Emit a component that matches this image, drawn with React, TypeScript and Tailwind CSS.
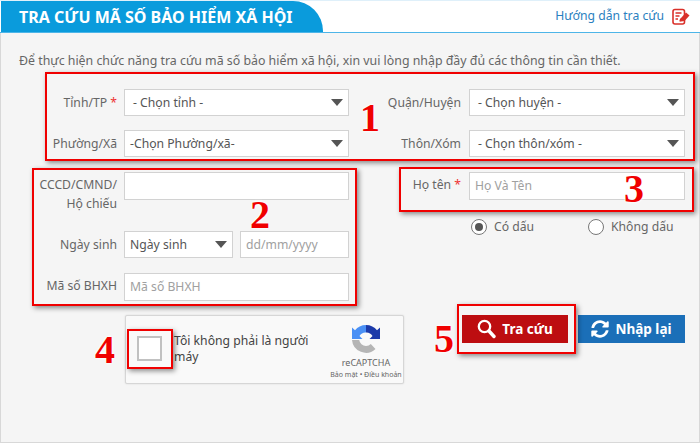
import type { ReactNode } from "react";
import { FaSyncAlt } from "react-icons/fa";

const boxClass = "h-full w-full border border-[#d2d2d2] bg-white text-[12.2px] text-[#555]";

function Label({ children, w, className = "" }: { children: ReactNode; w: string; className?: string }) {
  return <div className={`${w} shrink-0 text-right text-[12.2px] leading-[19px] text-[#666] ${className}`}>{children}</div>;
}

function Arrow() {
  return <span className="ml-auto mr-[5px] h-0 w-0 border-x-[6px] border-t-[7px] border-x-transparent border-t-[#555]" />;
}

function Select({ text, indent = "pl-[8px]" }: { text: string; indent?: string }) {
  return (
    <div className={`${boxClass} flex items-center ${indent}`}>
      <span className="pt-[2px]">{text}</span>
      <Arrow />
    </div>
  );
}

function Input({ placeholder }: { placeholder?: string }) {
  return (
    <div className={`${boxClass} flex items-center pl-[5px]`}>
      <span className="pt-[1px] text-[#a0a0a0]">{placeholder}</span>
    </div>
  );
}

function Radio({ on, label, className }: { on?: boolean; label: string; className: string }) {
  return (
    <div className={`flex items-center ${className}`}>
      <span className="flex h-[16px] w-[16px] items-center justify-center rounded-full border border-[#777] bg-white">
        {on && <span className="h-[8px] w-[8px] rounded-full bg-[#555]" />}
      </span>
      <span className="ml-[7px] text-[12.2px] text-[#666]">{label}</span>
    </div>
  );
}

function Mark({ className }: { className: string }) {
  return <div className={`absolute border-2 border-[#f00000] shadow-[2px_2px_5px_rgba(0,0,0,0.45)] ${className}`} />;
}

function Num({ n, className }: { n: string; className: string }) {
  return (
    <div
      className={`absolute font-['Liberation_Serif',serif] text-[40px] font-bold leading-none text-[#f00000] [text-shadow:0_0_3px_white,0_0_3px_white] ${className}`}
    >
      {n}
    </div>
  );
}

function RecaptchaLogo() {
  return (
    <svg width="28" height="29" viewBox="0 0 28 29">
      <path d="M14 0C9.500 0 5.500 2 3 5.300L0 2.500V14h10.500L7.500 11A7 7 0 0 1 14 7.500z" fill="#4a90f5" />
      <path d="M14 0c4.500 0 8.500 2 11 5.300L28 2.500V14H17.500l3-3A7 7 0 0 0 14 7.500z" fill="#1c3aa9" />
      <path d="M0 15h7.200A7 7 0 0 0 14 21c2 0 3.500-.8 4.800-2l4.700 5A14 14 0 0 1 0 15z" fill="#b5b5b5" />
    </svg>
  );
}

function SearchIcon() {
  return (
    <svg width="19" height="20" viewBox="0 0 19 20" fill="none" stroke="white">
      <circle cx="7.500" cy="7.500" r="5.700" strokeWidth="2.300" />
      <path d="M12 12l5 5.500" strokeWidth="3.400" strokeLinecap="round" />
    </svg>
  );
}

function GuideIcon() {
  return (
    <svg width="18" height="18" viewBox="0 0 18 18" fill="none" stroke="#d9302a" strokeWidth="1.600">
      <rect x="1" y="1.500" width="11.500" height="14.500" rx="2" />
      <path d="M3.500 5h6M3.500 8h4M3.500 11h2.500M8 13.500l1-3" />
      <path d="M9 10l5-5.500 3.500 3-5 5.500-3.500.5z" fill="#d9302a" stroke="none" />
    </svg>
  );
}

export default function App() {
  return (
    <div className="relative h-[443px] w-[700px] overflow-hidden bg-white font-['Noto_Sans',sans-serif]">
      <header className="flex h-[33px] items-end border-y border-t-[#dff0fa] border-b-[#4db5e8] pl-[1px]">
        <div className="flex h-[31px] w-[322px] items-center rounded-tr-[30px] bg-[#0a9bdc] pl-[18px] text-[16px] font-bold text-white">
          TRA CỨU MÃ SỐ BẢO HIỂM XÃ HỘI
        </div>
        <div className="ml-auto flex h-[31px] items-center pr-[10px] text-[12.2px] text-[#2a7fc0]">
          Hướng dẫn tra cứu
          <span className="ml-[8px]">
            <GuideIcon />
          </span>
        </div>
      </header>

      <main className="h-[410px] border-x border-b border-[#d8d8d8] bg-[#f5f5f5]">
        <p className="pl-[18px] pt-[19px] text-[12.36px] leading-[18px] text-[#666]">
          Để thực hiện chức năng tra cứu mã số bảo hiểm xã hội, xin vui lòng nhập đầy đủ các thông tin cần thiết.
        </p>

        <div className="mt-[19px] flex">
          <div className="w-[348px] shrink-0">
            <div className="flex h-[27px] items-center">
              <Label w="w-[116px]" className="pb-[1px]">
                Tỉnh/TP <span className="text-[#e33]">*</span>
              </Label>
              <div className="ml-[7px] h-full w-[225px]">
                <Select text="- Chọn tỉnh -" />
              </div>
            </div>
            <div className="mt-[14px] flex h-[27px] items-center">
              <Label w="w-[116px]">Phường/Xã</Label>
              <div className="ml-[7px] h-full w-[225px]">
                <Select text="-Chọn Phường/xã-" indent="pl-[5px]" />
              </div>
            </div>
            <div className="mt-[15px] flex h-[28px] items-start">
              <Label w="w-[116px]" className="pt-[3px]">
                CCCD/CMND/
                <br />
                Hộ chiếu
              </Label>
              <div className="ml-[7px] h-full w-[225px]">
                <Input />
              </div>
            </div>
            <div className="mt-[31px] flex h-[27px] items-center">
              <Label w="w-[116px]">Ngày sinh</Label>
              <div className="ml-[7px] h-full w-[109px]">
                <Select text="Ngày sinh" indent="pl-[5px]" />
              </div>
              <div className="ml-[7px] h-full w-[109px]">
                <Input placeholder="dd/mm/yyyy" />
              </div>
            </div>
            <div className="mt-[15px] flex h-[28px] items-center">
              <Label w="w-[116px]" className="pb-[3px]">
                Mã số BHXH
              </Label>
              <div className="ml-[7px] h-full w-[225px]">
                <Input placeholder="Mã số BHXH" />
              </div>
            </div>
          </div>

          <div className="w-[336px] shrink-0">
            <div className="flex h-[27px] items-center">
              <Label w="w-[112px]" className="pb-[1px]">
                Quận/Huyện
              </Label>
              <div className="ml-[8px] h-full w-[216px]">
                <Select text="- Chọn huyện -" />
              </div>
            </div>
            <div className="mt-[14px] flex h-[27px] items-center">
              <Label w="w-[112px]">Thôn/Xóm</Label>
              <div className="ml-[8px] h-full w-[216px]">
                <Select text="- Chọn thôn/xóm -" />
              </div>
            </div>
            <div className="mt-[15px] flex h-[28px] items-center">
              <Label w="w-[112px]" className="pb-[3px]">
                Họ tên <span className="text-[#e33]">*</span>
              </Label>
              <div className="ml-[8px] h-full w-[216px]">
                <Input placeholder="Họ Và Tên" />
              </div>
            </div>
            <div className="mt-[18px] flex h-[18px]">
              <Radio on label="Có dấu" className="ml-[122px] w-[117px]" />
              <Radio label="Không dấu" className="" />
            </div>
          </div>
        </div>

        <div className="mt-[14px] flex items-start pl-[124px]">
          <div className="flex h-[69px] w-[279px] rounded-[2px] border border-[#d6d6d6] bg-[#f9f9f9] shadow-[0_0_2px_rgba(0,0,0,0.12)]">
            <div className="ml-[11px] mt-[20px] h-[25px] w-[25px] shrink-0 border-2 border-[#c1c1c1] bg-white" />
            <div className="ml-[12px] mt-[17px] w-[155px] shrink-0 text-[12.2px] leading-[16px] text-[#444]">
              Tôi không phải là người máy
            </div>
            <div className="flex w-[74px] shrink-0 flex-col items-center pt-[9px] text-[#666]">
              <RecaptchaLogo />
              <div className="mt-[4px] text-[9px] leading-[10px]">reCAPTCHA</div>
              <div className="mt-[2px] whitespace-nowrap text-[7px] leading-[9px]">Bảo mật • Điều khoản</div>
            </div>
          </div>
          <div className="ml-[58px] flex gap-[10px]">
            <button type="button" className="flex h-[28px] w-[106px] items-center justify-center gap-[6px] bg-[#bd0d10] text-[13.5px] font-bold text-white">
              <SearchIcon />
              Tra cứu
            </button>
            <button type="button" className="flex h-[28px] w-[107px] items-center justify-center gap-[6px] bg-[#1b6fb8] text-[13.5px] font-bold text-white">
              <FaSyncAlt size={18} />
              Nhập lại
            </button>
          </div>
        </div>
      </main>

      <Mark className="left-[45px] top-[72px] h-[89px] w-[650px]" />
      <Mark className="left-[32px] top-[168px] h-[138px] w-[325px]" />
      <Mark className="left-[399px] top-[167px] h-[45px] w-[295px]" />
      <Mark className="left-[127px] top-[329px] h-[40px] w-[46px]" />
      <Mark className="left-[457px] top-[304px] h-[50px] w-[119px]" />
      <Num n="1" className="left-[360px] top-[98px]" />
      <Num n="2" className="left-[250px] top-[195px]" />
      <Num n="3" className="left-[624px] top-[169px]" />
      <Num n="4" className="left-[95px] top-[330px]" />
      <Num n="5" className="left-[434px] top-[319px]" />
    </div>
  );
}
